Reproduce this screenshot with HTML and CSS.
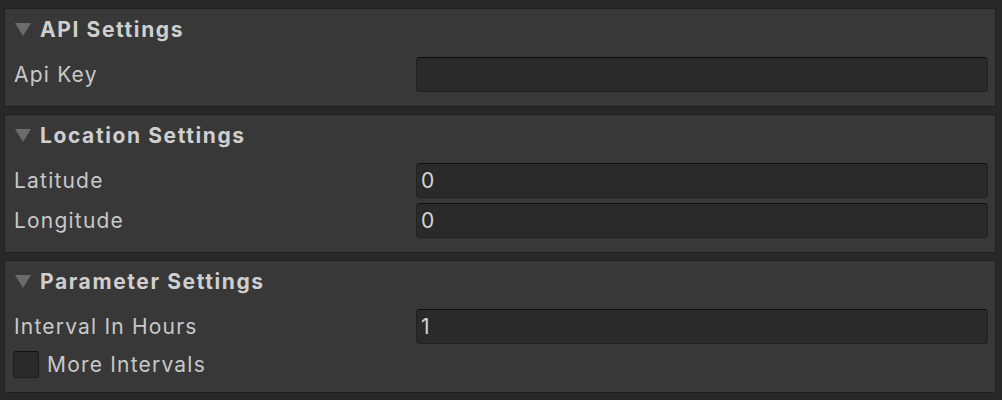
FILE: index.html
```html
<!DOCTYPE html>
<html>
<head>
	<meta charset="UTF-8">
	<title>Weather Settings</title>
	<link rel="stylesheet" href="styles.css">
</head>
<body>
	<div class="inspector">
		<div class="group">
			<div class="head">
				<svg class="fold" width="16" height="13" viewBox="0 0 16 13"><path d="M0 0H16L8 13Z" fill="#6b6b6b"/></svg>
				<span>API Settings</span>
			</div>
			<div class="body">
				<div class="row">
					<label>Api Key</label>
					<div class="field"></div>
				</div>
			</div>
		</div>

		<div class="group">
			<div class="head">
				<svg class="fold" width="16" height="13" viewBox="0 0 16 13"><path d="M0 0H16L8 13Z" fill="#6b6b6b"/></svg>
				<span>Location Settings</span>
			</div>
			<div class="body">
				<div class="row">
					<label>Latitude</label>
					<div class="field">0</div>
				</div>
				<div class="row">
					<label>Longitude</label>
					<div class="field">0</div>
				</div>
			</div>
		</div>

		<div class="group">
			<div class="head">
				<svg class="fold" width="16" height="13" viewBox="0 0 16 13"><path d="M0 0H16L8 13Z" fill="#6b6b6b"/></svg>
				<span>Parameter Settings</span>
			</div>
			<div class="body">
				<div class="row">
					<label>Interval In Hours</label>
					<div class="field">1</div>
				</div>
				<div class="check">
					<span class="box"></span>
					<label>More Intervals</label>
				</div>
			</div>
		</div>
	</div>
</body>
</html>
```

FILE: styles.css
```css
body{
	margin: 0;
	background-color: #282828;
	font-family: Inter, "Noto Sans", sans-serif;
	color: #c8c8c8;
}
.inspector{
	padding: 8px 6px 0 4px;
}
.group{
	background-color: #383838;
	border: 1px solid #1f1f1f;
	border-radius: 2px;
	margin-bottom: 7px;
}
.head{
	height: 40px;
	display: flex;
	align-items: center;
	padding-left: 10px;
	font-size: 21px;
	font-weight: 700;
	letter-spacing: 1.6px;
	color: #cfcfcf;
}
.fold{
	margin-right: 9px;
	margin-top: 1px;
}
.body{
	padding: 8px 7px 14px 9px;
	display: flex;
	flex-direction: column;
	gap: 5px;
}
.row{
	display: flex;
	align-items: center;
	height: 35px;
}
.row label{
	width: 402px;
	font-size: 21px;
	letter-spacing: 1.2px;
}
.field{
	flex: 1;
	box-sizing: border-box;
	height: 35px;
	padding-left: 4px;
	line-height: 34px;
	font-size: 21px;
	color: #d4d4d4;
	background-color: #2a2a2a;
	border: 1px solid #212121;
	border-top-color: #0d0d0d;
	border-radius: 4px;
}
.check{
	display: flex;
	align-items: center;
	height: 28px;
	margin-top: 1px;
}
.box{
	width: 26px;
	height: 27px;
	box-sizing: border-box;
	margin-left: -1px;
	background-color: #2a2a2a;
	border: 1px solid #1e1e1e;
	border-top-color: #111;
	border-radius: 3px;
}
.check label{
	margin-left: 8px;
	font-size: 21px;
	letter-spacing: 1.2px;
}
```
